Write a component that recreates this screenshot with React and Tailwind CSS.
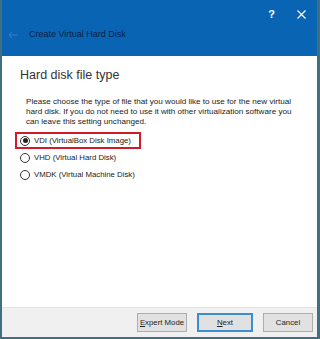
const Radio = ({ checked, label }) => (
  <div className="flex items-center gap-[4px] h-[17px]">
    <span className="w-[10px] h-[10px] rounded-full border border-[#333] bg-white flex items-center justify-center">
      {checked && <span className="w-[5px] h-[5px] rounded-full bg-[#222]" />}
    </span>
    <span>{label}</span>
  </div>
);

export default function App() {
  return (
    <div
      className="w-[320px] h-[339px] flex flex-col bg-[#0a64b4] border-l-2 border-r-[3px] border-b-2 border-[#3f6f80]"
      style={{ fontFamily: '"Liberation Sans", Arial, sans-serif' }}
    >
      {/* Title bar */}
      <div className="h-[56px] flex flex-col text-white">
        <div className="flex justify-end items-center gap-[22px] pr-[11px] pt-[4px] h-[24px] text-[11px]">
          <span className="font-bold">?</span>
          <svg width="9" height="9" viewBox="0 0 9 9" className="stroke-white" strokeWidth="1.2">
            <path d="M0.5 0.5 L8.5 8.5 M8.5 0.5 L0.5 8.5" />
          </svg>
        </div>
        <div className="flex items-center gap-[11px] pl-[6px] pt-[4px] text-[9px] text-[#0a1f45]">
          <svg width="10" height="8" viewBox="0 0 10 8" fill="none" className="stroke-[#3a7cc4]" strokeWidth="1">
            <path d="M9.5 4 H1 M4 0.8 L0.8 4 L4 7.2" />
          </svg>
          <span>Create Virtual Hard Disk</span>
        </div>
      </div>

      {/* Content */}
      <div className="flex-1 bg-white pl-[18px] pt-[11px] text-[#222]">
        <h1 className="text-[12.5px] text-[#333] leading-[16px]">Hard disk file type</h1>
        <p className="mt-[14px] ml-[6px] text-[8.1px] leading-[10px]">
          Please choose the type of file that you would like to use for the new virtual
          <br />
          hard disk. If you do not need to use it with other virtualization software you
          <br />
          can leave this setting unchanged.
        </p>
        <div className="mt-[5px] text-[7.8px] flex flex-col">
          <div className="w-[126px] border-2 border-[#d01c2a] -ml-[5px] pl-[3px] h-[17px] flex items-center">
            <Radio checked label="VDI (VirtualBox Disk Image)" />
          </div>
          <div>
            <Radio label="VHD (Virtual Hard Disk)" />
            <Radio label="VMDK (Virtual Machine Disk)" />
          </div>
        </div>
      </div>

      {/* Footer */}
      <div className="h-[30px] bg-[#f0f0f0] border-t border-[#e3e3e3] flex items-center justify-end gap-[10px] pr-[4px] text-[7.8px] text-[#222]">
        <button className="w-[50px] h-[19px] bg-[#e1e1e1] border border-[#adadad]">
          <span className="underline">E</span>xpert Mode
        </button>
        <button className="w-[56px] h-[19px] bg-[#e1e1e1] border-2 border-[#3c8dd4]">
          <span className="underline">N</span>ext
        </button>
        <button className="w-[50px] h-[19px] bg-[#e1e1e1] border border-[#adadad]">Cancel</button>
      </div>
    </div>
  );
}
